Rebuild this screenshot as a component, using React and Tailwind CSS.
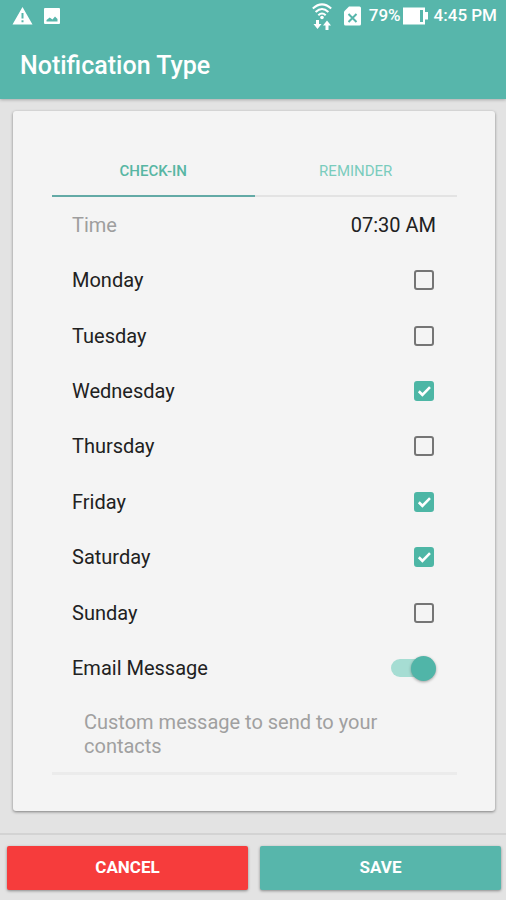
import { useState } from "react";

const initialDays = [
  { name: "Monday", checked: false },
  { name: "Tuesday", checked: false },
  { name: "Wednesday", checked: true },
  { name: "Thursday", checked: false },
  { name: "Friday", checked: true },
  { name: "Saturday", checked: true },
  { name: "Sunday", checked: false },
];

function StatusBar() {
  return (
    <div className="flex h-8 items-center justify-between pr-[9px] pl-3 text-white">
      <div className="flex items-center gap-2.5">
        <svg width="21" height="18" viewBox="0 0 21 18" fill="currentColor" aria-hidden="true">
          <path fillRule="evenodd" d="M10.5 0 20.5 17.5H0.5ZM9.5 6v5.5h2V6ZM9.5 13.2v2h2v-2Z" />
        </svg>
        <svg width="18" height="18" viewBox="0 0 18 18" fill="currentColor" aria-hidden="true">
          <path fillRule="evenodd" d="M2 1h14a1 1 0 0 1 1 1v14a1 1 0 0 1-1 1H2a1 1 0 0 1-1-1V2a1 1 0 0 1 1-1ZM3.500 14.500h11V12L12 9.500l-2.500 3-2.800-2L3.500 13Z" />
        </svg>
      </div>
      <div className="flex items-center text-[17px] font-medium">
        <svg className="mr-3" width="20" height="28" viewBox="0 0 20 28" aria-hidden="true">
          <g fill="none" stroke="currentColor" strokeWidth="2">
            <path d="M0.800 6.500Q10-1.800 19.200 6.500" />
            <path d="M3.600 10Q10 4 16.400 10" />
            <path d="M6.300 13.300Q10 9.600 13.700 13.300" />
          </g>
          <circle cx="10" cy="15.500" r="1.800" fill="currentColor" />
          <path fill="currentColor" d="M4 18h3v4h2.500L5.500 27 1.500 22h2.500ZM13.500 28h3V23.500h2.500l-4-5-4 5h2.500Z" />
        </svg>
        <svg className="mr-2" width="17" height="20" viewBox="0 0 17 20" aria-hidden="true">
          <path fill="currentColor" d="M5 0.500h10.500a1.500 1.500 0 0 1 1.500 1.500v16a1.500 1.500 0 0 1-1.500 1.500h-14A1.500 1.500 0 0 1 0 18V5.500Z" />
          <path stroke="#57b6ab" strokeWidth="2" d="M4.500 8l8 8M12.500 8l-8 8" />
        </svg>
        <span>79%</span>
        <svg className="mr-1.5 ml-[2px]" width="25" height="18" viewBox="0 0 25 18" aria-hidden="true">
          <path fill="currentColor" fillRule="evenodd" d="M0 0.500h22V5h3v7.500h-3v5H0ZM17 3v12h3V3Z" />
        </svg>
        <span>4:45 PM</span>
      </div>
    </div>
  );
}

function Tab({ label, active, onClick }) {
  return (
    <button
      type="button"
      role="tab"
      aria-selected={active}
      className={`flex-1 border-b-2 text-[15px] ${active ? "border-[#63aaa6] font-medium text-[#57b6a3]" : "border-[#e3e3e3] text-[#7accbd]"}`}
      onClick={onClick}
    >
      {label}
    </button>
  );
}

function DayRow({ name, checked, onChange }) {
  return (
    <label className="flex items-center justify-between">
      {name}
      <span className="relative mr-0.5 flex">
        <input
          type="checkbox"
          className="size-5 appearance-none rounded-[3px] border-2 border-[#757575] checked:border-[#4db6a5] checked:bg-[#4db6a5]"
          checked={checked}
          onChange={onChange}
        />
        {checked ? (
          <svg
            className="pointer-events-none absolute inset-0 text-white"
            width="20"
            height="20"
            viewBox="0 0 20 20"
            fill="none"
            stroke="currentColor"
            strokeWidth="2.600"
            aria-hidden="true"
          >
            <path d="M4.800 10.300 8.400 13.800 16 6.200" />
          </svg>
        ) : null}
      </span>
    </label>
  );
}

function App() {
  const [tab, setTab] = useState("checkin");
  const [days, setDays] = useState(initialDays);
  const [emailOn, setEmailOn] = useState(true);
  const [message, setMessage] = useState("");

  function toggleDay(name) {
    setDays(days.map((day) => (day.name === name ? { ...day, checked: !day.checked } : day)));
  }

  return (
    <div className="flex min-h-screen flex-col bg-[#e3e3e3] font-[Roboto,sans-serif]">
      <header className="h-[99px] bg-[#57b6ab] shadow-[0_1px_3px_rgba(0,0,0,0.25)]">
        <StatusBar />
        <h1 className="px-5 pt-[18px] text-[25px] leading-8 font-medium text-white">Notification Type</h1>
      </header>

      <main className="flex-1 pt-3 pr-[11px] pb-[22px] pl-[13px]">
        <section className="rounded-[3px] bg-[#f4f4f4] pt-9 pr-[38px] pb-9 pl-[39px] shadow-[0_1px_3px_rgba(0,0,0,0.45)]">
          <div role="tablist" className="flex h-[50px]">
            <Tab label="CHECK-IN" active={tab === "checkin"} onClick={() => setTab("checkin")} />
            <Tab label="REMINDER" active={tab === "reminder"} onClick={() => setTab("reminder")} />
          </div>

          <div className="grid h-[499px] auto-rows-fr pr-[21px] pl-5 text-xl text-[#212121]">
            <div className="flex items-center justify-between">
              <span className="text-[#9e9e9e]">Time</span>
              <button type="button">07:30 AM</button>
            </div>
            {days.map((day) => (
              <DayRow key={day.name} name={day.name} checked={day.checked} onChange={() => toggleDay(day.name)} />
            ))}
            <label className="flex items-center justify-between">
              Email Message
              <span className="relative flex h-6 w-[45px] items-center">
                <input
                  type="checkbox"
                  role="switch"
                  className="peer h-[18px] w-10 appearance-none rounded-full bg-[#c4c4c4] checked:bg-[#a6ddd3]"
                  checked={emailOn}
                  onChange={() => setEmailOn(!emailOn)}
                />
                <span className="pointer-events-none absolute left-0 size-[25px] rounded-full bg-[#fafafa] shadow-[0_1px_3px_rgba(0,0,0,0.35)] peer-checked:left-5 peer-checked:bg-[#50b5a8]" />
              </span>
            </label>
          </div>

          <textarea
            aria-label="Custom message"
            rows={2}
            className="block w-full resize-none border-b-3 border-[#ebebeb] pt-3.5 pr-5 pb-3.5 pl-8 text-xl leading-6 text-[#212121] outline-none placeholder:text-[#a0a0a0]"
            placeholder="Custom message to send to your contacts"
            value={message}
            onChange={(event) => setMessage(event.target.value)}
          />
        </section>
      </main>

      <footer className="flex gap-3 border-t-2 border-[#d3d3d3] pt-[11px] pr-[5px] pb-2.5 pl-[7px] text-[17px] font-bold text-white">
        <button type="button" className="h-11 flex-1 rounded-[2px] bg-[#f63c3c] shadow-[0_1px_3px_rgba(0,0,0,0.4)]">
          CANCEL
        </button>
        <button type="button" className="h-11 flex-1 rounded-[2px] bg-[#57b6ab] shadow-[0_1px_3px_rgba(0,0,0,0.4)]">
          SAVE
        </button>
      </footer>
    </div>
  );
}

export default App;
